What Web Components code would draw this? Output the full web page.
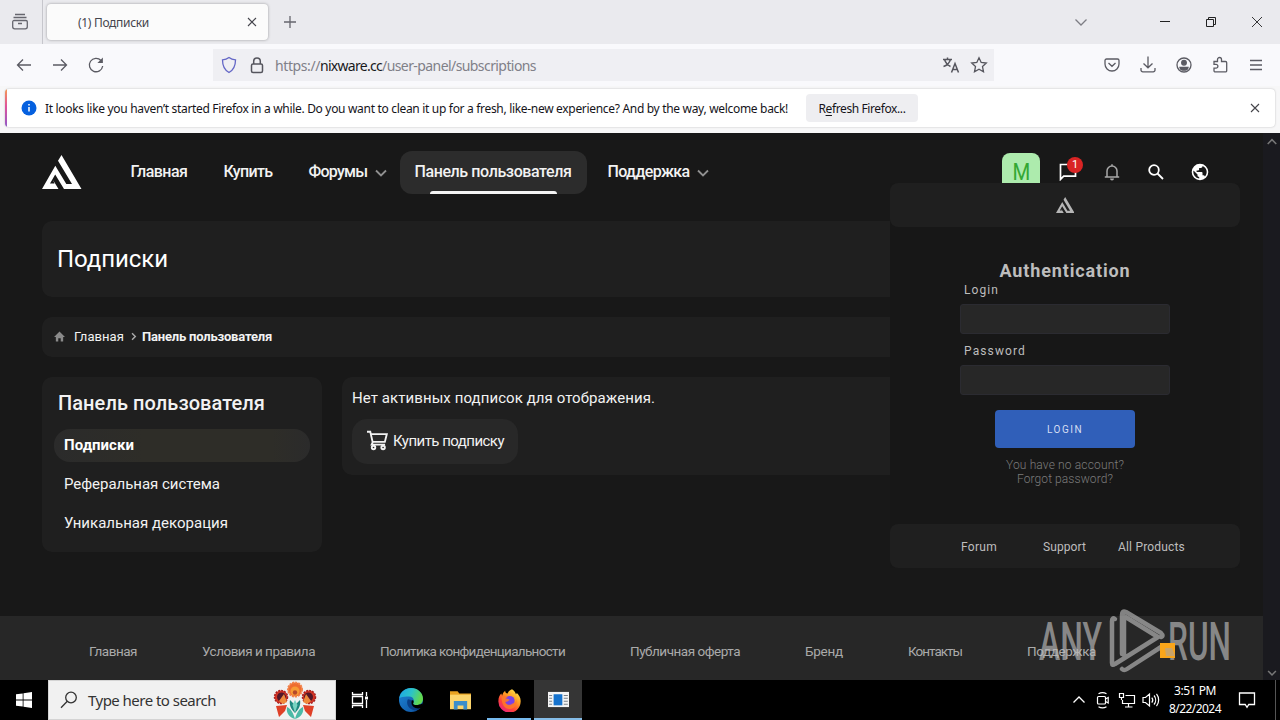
<!DOCTYPE html>
<html lang="ru">
<head>
<meta charset="utf-8">
<title>Подписки</title>
<style>
  body {
    margin: 0;
    width: 1280px;
    height: 720px;
    overflow: hidden;
    background: #000;
    font-family: Roboto, "Noto Sans", sans-serif;
  }
</style>
</head>
<body>
<desktop-screen></desktop-screen>

<script>
const ICONS = {
  view: `<path d="M4 1.500h10M2.500 4.500h13M3 7.500h12a1.300 1.300 0 0 1 1.300 1.300v5a2 2 0 0 1-2 2H3.700a2 2 0 0 1-2-2v-5A1.300 1.300 0 0 1 3 7.500zM7 10.500h4"/>`,
  close: `<path d="M5 5l8 8M13 5l-8 8"/>`,
  closeBig: `<path d="M4 4l10 10M14 4l-10 10"/>`,
  plus: `<path d="M9 3v12M3 9h12"/>`,
  down: `<path d="M3.500 6.500L9 12l5.500-5.500"/>`,
  min: `<path d="M4 8.500h10"/>`,
  restore: `<path d="M4.500 6.500h7v7h-7zM6.500 6.500v-2h7v7h-2"/>`,
  back: `<path d="M16 9H2.500M8 3.500L2.500 9 8 14.500"/>`,
  forward: `<path d="M2 9h13.500M10 3.500L15.500 9 10 14.500"/>`,
  reload: `<path d="M15.700 10A6.700 6.700 0 1 1 14 4.500"/><path d="M15.900 1.500v5.500h-5.500z" fill="currentColor" stroke="none"/>`,
  shield: `<path d="M9 1.500c2 1.600 4 2.200 6.500 2.400 0 6-1.500 9.700-6.500 12.600C4 13.600 2.500 9.900 2.500 3.900 5 3.700 7 3.100 9 1.500z"/>`,
  lock: `<rect x="3.500" y="8" width="11" height="8.500" rx="1.500"/><path d="M5.700 8V5.300a3.300 3.300 0 0 1 6.600 0V8"/>`,
  translate: `<path d="M1 3.500h9M5.500 1.500v2M2.500 3.500c1 3 3 5.500 6 7M8.500 3.500c-1 3-3.500 6-7 7M9.500 16.500l3.500-9 3.500 9M10.700 13.500h4.600"/>`,
  star: `<path d="M9 1.800l2.200 4.700 5.100.600-3.800 3.500 1 5.200L9 13.200l-4.500 2.600 1-5.200-3.800-3.500 5.100-.600z"/>`,
  pocket: `<path d="M3.500 3h11A1.500 1.500 0 0 1 16 4.500V8A7 7 0 0 1 2 8V4.500A1.500 1.500 0 0 1 3.500 3zM5.500 7L9 10.300 12.500 7"/>`,
  download: `<path d="M9 .500v11M4.500 7.500L9 11.800l4.500-4.300M2 12v2A1.800 1.800 0 0 0 3.800 15.800h10.400A1.800 1.800 0 0 0 16 14v-2"/>`,
  account: `<circle cx="9" cy="9" r="7"/><circle cx="9" cy="6.800" r="2.300" fill="currentColor"/><path d="M5 11.500h8c-.500 2-2.300 2.700-4 2.700s-3.500-.700-4-2.700z" fill="currentColor"/>`,
  puzzle: `<path d="M3 5.500h3.500V3.500a2 2 0 0 1 4 0v2h4A1.200 1.200 0 0 1 15.700 6.700v8a1.200 1.200 0 0 1-1.200 1.200H4.200A1.200 1.200 0 0 1 3 14.700v-2.500h2a1.900 1.900 0 0 0 0-3.800H3z"/>`,
  menu: `<path d="M3 4.500h12M3 9h12M3 13.500h12"/>`,
  info: `<circle cx="9" cy="9" r="7.500" fill="#0560df" stroke="none"/><path d="M9 8v4.500M9 5v1.400" stroke="#fff" stroke-width="1.500"/>`,
  logo: `<path d="M0 34L13.300 10.700 24.300 29H30L16 5.700 19.500 0 39.500 34H22L13.200 19.500 8 28.500h4.500l-1.500-3.500 5.500 9z" fill="currentColor" stroke="none"/>`,
  chevron: `<path d="M4 6.500L9 11.500 14 6.500"/>`,
  right: `<path d="M7 4.500L11.500 9 7 13.500"/>`,
  home: `<path d="M9 1L0 10h3v7h4v-5h4v5h4v-7h3z" fill="currentColor" stroke="none"/>`,
  chat: `<path d="M1.500 1.500h15v11.700H4.700L1.500 16.400z"/>`,
  bell: `<path d="M4 13.500V8a5 5 0 0 1 10 0v5.500M1.800 14h14.400M9 1.200v1.800"/><path d="M7 15.500h4a2 2 0 0 1-4 0z" fill="currentColor" stroke="none"/>`,
  search: `<circle cx="7" cy="7" r="4.800"/><path d="M10.500 10.500l5.500 5.500"/>`,
  globe: `<path d="M9 .7a8.300 8.300 0 1 0 0 16.600A8.300 8.300 0 0 0 9 .7zM8.200 15.600A6.700 6.700 0 0 1 2.500 7.500l4 4v.8c0 .9.700 1.700 1.700 1.700zm5.700-2.100a1.700 1.700 0 0 0-1.600-1.200h-.8V9.800c0-.5-.4-.8-.9-.8h-5V7.400h1.700c.5 0 .8-.4.800-.8V4.900h1.700c.9 0 1.700-.8 1.700-1.700v-.3a6.600 6.600 0 0 1 2.400 10.600z" fill="currentColor" stroke="none"/>`,
  cart: `<path d="M0 1.500h2.800l2 8.700h10.500L17 3.500H3.400M5 10.200l-1 2.300h11.500"/><circle cx="5.600" cy="15" r="1.500"/><circle cx="13.800" cy="15" r="1.500"/>`,
  windows: `<path d="M1 3.300l6.700-.9v6.200H1zM8.500 2.300L17 1v7.600H8.500zM1 9.400h6.700v6.200L1 14.700zM8.500 9.400H17V17l-8.500-1.200z" fill="currentColor" stroke="none"/>`,
  find: `<circle cx="11" cy="6.500" r="5.300"/><path d="M7.300 10.300L1 16.700"/>`,
  taskview: `<path d="M1.500 1v2.500h10V1M1.500 5.500h10v7h-10zM1.500 17v-2.500h10V17M15.500 1v4M15.500 9v8"/><path d="M14 5.500h3v3h-3z" fill="currentColor" stroke="none"/>`,
  edge: `<defs><linearGradient id="e" x1="0" y1="0" x2="1" y2=".3"><stop offset="0" stop-color="#1ba4e8"/><stop offset=".55" stop-color="#2cc3c8"/><stop offset="1" stop-color="#62d94e"/></linearGradient><linearGradient id="f" x1="0" y1="0" x2="1" y2="1"><stop offset="0" stop-color="#1f86d6"/><stop offset="1" stop-color="#0c509f"/></linearGradient></defs>
    <g stroke="none"><circle cx="9" cy="9" r="9" fill="url(#f)"/><path d="M.2 7.500C1 2.800 4.800 0 9 0c5 0 9 3.700 9 8 0 3.200-2.300 4.800-4.800 4.800-2.200 0-3-.9-2.500-1.800 1-1.400.4-4.300-3-4.600C4.400 6 1.500 6.700.2 7.500z" fill="url(#e)"/><path d="M6.700 8.500c-1.700 3 .2 7.700 5.300 8.300 2 0 3.600-.9 4.700-2.400-4 1.300-7.200-.2-7.300-3.200 0-.9.500-1.500.8-2.100z" fill="#0a3f86"/><path d="M9.300 10.500c.4-1.500 1.700-1.800 1.700 0 0 .8-.9 1.300.1 1.900 1.200.7 4 .5 6.400-.7l.3 1.300-.7 1.600c-3.200 2-8.100-.1-7.800-4.100z" fill="#000"/></g>`,
  folder: `<g stroke="none"><path d="M0 1h6.500l1.500 2H18v13H0z" fill="#e9a321"/><path d="M0 4h18v12.500H0z" fill="#fcd56c"/><path d="M3.300 9.500h11.400v7.200h-3.200v-3.500h-5v3.500H3.300z" fill="#3b8ecb"/></g>`,
  firefox: `<defs><linearGradient id="x" x1=".9" y1="0" x2=".2" y2="1"><stop offset="0" stop-color="#fff14f"/><stop offset=".4" stop-color="#ff9a22"/><stop offset=".7" stop-color="#ff4338"/><stop offset="1" stop-color="#e6208a"/></linearGradient></defs>
    <g stroke="none"><path d="M11 .2c2 1.300 2.700 2.700 3 4 .5-.3.600-.8.600-1.300 2 2 3.400 4.200 3.100 7.200A8.700 8.700 0 0 1 .3 9.500c0-3 1-4.800 2.300-6l.6 1.800c.4-1.700 1.300-3 2.400-3.900 0 1.300.7 2 1.900 2.200C8.300 1.500 9.600.7 11 .2z" fill="url(#x)"/><circle cx="9.200" cy="9.200" r="3.800" fill="#7a42e6"/><path d="M2.800 6.500c2-1.300 3.700-1.200 5-.2-1 .2-1.500.8-2 1.200 1.300 0 2.200.4 3.300 1-1 1.500-2.300 1.500-3.500 1.700.8 2.400 4 2.900 5.700 1.200 1.700 0 3-1 3-3 1 3-1 7-5 7.300-3.800.200-6.500-3.200-6.500-9.200z" fill="#ff7a28" opacity=".85"/></g>`,
  app: `<g stroke="none"><path d="M0 2.500h18v13H0z" fill="#f4f4f4"/><path d="M4.800 4.500h7.500V14H4.800z" fill="#1673ce"/><path d="M1 5.500h2.500M1 8h2.500M1 10.500h2.500M1 13h2.500M13.500 5.500H17M13.500 8H17M13.500 10.500H17M13.500 13H17" stroke="#7a8088" stroke-width=".9"/></g>`,
  up: `<path d="M3.500 11.500L9 6l5.500 5.500"/>`,
  camera: `<rect x="3.500" y="5.500" width="8" height="7.500" rx="1"/><path d="M11.500 8l2.700-1.500v5.500L11.500 10.500M4.500 2.800a8 8 0 0 1 8 0M4.500 15.700a8 8 0 0 0 8 0"/>`,
  network: `<path d="M7.500 4.500h9v8h-12V9M10.500 12.500V16M7 16h7.500M1.500 2.500h4v4h-4zM3.500 6.500v2.500"/>`,
  sound: `<path d="M1 6.500h2.500L7.500 3v12L3.500 11.500H1zM9.800 6.500a4 4 0 0 1 0 5M12 4.500a7 7 0 0 1 0 9M14.500 2.800a10 10 0 0 1 0 12.400"/>`,
  note: `<path d="M1.500 2h15v11.500h-5.700L9 16.300 7.200 13.500H1.500z"/>`
};

class UiIcon extends HTMLElement {
  connectedCallback() {
    const size = this.getAttribute('size') || 18;
    const box = this.getAttribute('box') || '0 0 18 18';
    const w = this.getAttribute('w') || 1.3;
    this.attachShadow({ mode: 'open' }).innerHTML = `
      <style>
        :host { display: inline-flex; flex: none; align-items: center; justify-content: center; }
        svg { display: block; fill: none; stroke: currentColor; }
      </style>
      <svg height="${size}" viewBox="${box}" stroke-width="${w}" style="width:${box === '0 0 18 18' ? size + 'px' : 'auto'}">${ICONS[this.getAttribute('name')]}</svg>
    `;
  }
}

// Spreads its text over a fixed width by adjusting the letter spacing
class FitText extends HTMLElement {
  connectedCallback() {
    this.attachShadow({ mode: 'open' }).innerHTML = `
      <style>:host { display: inline-block; flex: none; white-space: nowrap; }</style><slot></slot>
    `;
    const width = Number(this.getAttribute('width'));
    const diff = width - this.getBoundingClientRect().width;
    this.style.letterSpacing = diff / this.textContent.length + 'px';
    this.style.width = width + 'px';
  }
}

class BrowserTabs extends HTMLElement {
  connectedCallback() {
    this.attachShadow({ mode: 'open' }).innerHTML = `
      <style>
        :host {
          display: flex;
          align-items: center;
          height: 44px;
          background: #eaeaee;
          color: #66666e;
          font: 12px "Noto Sans", sans-serif;
        }
        .view { width: 43px; height: 44px; box-sizing: border-box; padding-right: 2px; border-right: 1px solid #c6c6cc; }
        .tab {
          display: flex;
          align-items: center;
          width: 221px;
          height: 36px;
          margin-left: 4px;
          padding: 0 7px 0 31px;
          box-sizing: border-box;
          border-radius: 4px;
          background: #fbfbfb;
          box-shadow: 0 0 3px rgba(0, 0, 0, .35);
          justify-content: space-between;
          color: #45454d;
        }
        .plus { margin-left: 13px; }
        .list { margin-left: auto; width: 30px; margin-right: 46px; color: #7d7d84; }
        .win { width: 46px; color: #222; }
        .last { margin-right: 0; }
      </style>
      <ui-icon class="view" name="view"></ui-icon>
      <div class="tab"><fit-text width="71">(1) Подписки</fit-text><ui-icon name="close" w="1.100"></ui-icon></div>
      <ui-icon class="plus" name="plus"></ui-icon>
      <ui-icon class="list" name="down"></ui-icon>
      <ui-icon class="win" name="min" w="1"></ui-icon>
      <ui-icon class="win" name="restore" w="1"></ui-icon>
      <ui-icon class="win last" name="closeBig" w=".9"></ui-icon>
    `;
  }
}

class BrowserToolbar extends HTMLElement {
  connectedCallback() {
    this.attachShadow({ mode: 'open' }).innerHTML = `
      <style>
        :host {
          display: flex;
          align-items: center;
          height: 42px;
          padding: 0 6px;
          background: #f9f9fc;
          color: #5b5b63;
        }
        .btn { width: 36px; }
        .address {
          display: flex;
          align-items: center;
          width: 781px;
          height: 32px;
          margin: 0 100px 0 99px;
          padding: 0 1px 0 2px;
          box-sizing: border-box;
          background: #efeff3;
          font: 14px "Noto Sans", sans-serif;
          color: #808088;
        }
        .address ui-icon { width: 28px; color: #55555d; }
        .address .shield { color: #6467c6; }
        .url { display: flex; flex: 1; padding-left: 4px; }
        .host { color: #18181c; }
      </style>
      <ui-icon class="btn" name="back"></ui-icon>
      <ui-icon class="btn" name="forward"></ui-icon>
      <ui-icon class="btn" name="reload"></ui-icon>
      <div class="address">
        <ui-icon class="shield" name="shield"></ui-icon>
        <ui-icon name="lock" w="1.500"></ui-icon>
        <div class="url"><fit-text width="45">https://</fit-text><fit-text class="host" width="62">nixware.cc</fit-text><fit-text width="154">/user-panel/subscriptions</fit-text></div>
        <ui-icon name="translate" w="1.500"></ui-icon>
        <ui-icon name="star"></ui-icon>
      </div>
      <ui-icon class="btn" name="pocket"></ui-icon>
      <ui-icon class="btn" name="download"></ui-icon>
      <ui-icon class="btn" name="account"></ui-icon>
      <ui-icon class="btn" name="puzzle"></ui-icon>
      <ui-icon class="btn" name="menu"></ui-icon>
    `;
  }
}

class RefreshNotice extends HTMLElement {
  connectedCallback() {
    this.attachShadow({ mode: 'open' }).innerHTML = `
      <style>
        :host { display: block; height: 47px; padding: 3px 5px 0; box-sizing: border-box; background: #f7f7f8; }
        .card {
          display: flex;
          align-items: center;
          height: 38px;
          border-radius: 4px;
          background: linear-gradient(#f59a52, #e0529a 45%, #9059c8) left / 2px 100% no-repeat #fff;
          box-shadow: 0 0 2px rgba(0, 0, 0, .25);
          padding-left: 15px;
          font: 12px "Noto Sans", sans-serif;
          color: #15141a;
        }
        .text { margin-left: 7px; }
        button {
          width: 112px;
          height: 28px;
          margin-left: 18px;
          padding: 0;
          border: 0;
          border-radius: 4px;
          background: #eeeef1;
          font: inherit;
          color: inherit;
        }
        u { text-underline-offset: 2px; }
        .close { margin: 0 11px 0 auto; color: #44444a; }
      </style>
      <div class="card">
        <ui-icon name="info"></ui-icon>
        <fit-text class="text" width="743">It looks like you haven’t started Firefox in a while. Do you want to clean it up for a fresh, like-new experience? And by the way, welcome back!</fit-text>
        <button><fit-text width="87">R<u>e</u>fresh Firefox...</fit-text></button>
        <ui-icon class="close" name="close" w="1.100"></ui-icon>
      </div>
    `;
  }
}

class SiteHeader extends HTMLElement {
  connectedCallback() {
    this.attachShadow({ mode: 'open' }).innerHTML = `
      <style>
        :host { display: flex; align-items: center; height: 43px; color: #fff; font-size: 16px; font-weight: 500; }
        .logo { margin: 0 34px 2px 0; }
        nav { display: flex; gap: 6px; flex: 1; }
        a { position: relative; display: flex; align-items: center; height: 43px; padding: 0 15px 2px; box-sizing: border-box; color: #f2f2f2; }
        a ui-icon { margin: 3px -11px 0 4px; color: #909090; }
        .active { border-radius: 12px; background: #2c2c2c; }
        .active::after {
          content: "";
          position: absolute;
          left: 30px;
          right: 30px;
          bottom: 0;
          height: 3px;
          border-radius: 3px 3px 0 0;
          background: #f4f4f4;
        }
        .avatar {
          width: 38px;
          height: 38px;
          margin: 0 6px 2px 0;
          border-radius: 8px;
          background: #adebad;
          color: #33a833;
          font: 24px/38px Roboto, sans-serif;
          text-align: center;
        }
        .avatar span { display: inline-block; transform: scaleX(.85); }
        .tool { position: relative; width: 44px; display: flex; justify-content: center; margin-bottom: 2px; }
        .dim { color: #a8a8a8; }
        .badge {
          position: absolute;
          left: 21px;
          top: -6px;
          width: 16px;
          height: 16px;
          border-radius: 50%;
          background: #d92424;
          font: 11px/16px Roboto, sans-serif;
          text-align: center;
        }
      </style>
      <ui-icon class="logo" name="logo" size="34" box="0 0 39.500 34"></ui-icon>
      <nav>
        <a><fit-text width="57">Главная</fit-text></a>
        <a><fit-text width="49">Купить</fit-text></a>
        <a><fit-text width="59">Форумы</fit-text><ui-icon name="chevron" w="1.800"></ui-icon></a>
        <a class="active"><fit-text width="157">Панель пользователя</fit-text></a>
        <a><fit-text width="82">Поддержка</fit-text><ui-icon name="chevron" w="1.800"></ui-icon></a>
      </nav>
      <div class="avatar"><span>M</span></div>
      <div class="tool"><ui-icon name="chat" w="1.700"></ui-icon><span class="badge">1</span></div>
      <div class="tool dim"><ui-icon name="bell" w="1.500"></ui-icon></div>
      <div class="tool"><ui-icon name="search" w="1.800"></ui-icon></div>
      <div class="tool"><ui-icon name="globe"></ui-icon></div>
    `;
  }
}

class PanelBlock extends HTMLElement {
  connectedCallback() {
    this.attachShadow({ mode: 'open' }).innerHTML = `
      <style>
        :host { display: block; box-sizing: border-box; border-radius: 10px; background: #1f1f1f; color: #f2f2f2; }
      </style>
      <slot></slot>
    `;
  }
}

class SiteFooter extends HTMLElement {
  connectedCallback() {
    this.attachShadow({ mode: 'open' }).innerHTML = `
      <style>
        :host {
          display: flex;
          gap: 65px;
          align-items: center;
          height: 64px;
          padding: 6px 0 0 89px;
          box-sizing: border-box;
          background: #272727;
          color: #aaa;
          font-size: 13.5px;
        }
      </style>
      <fit-text width="48">Главная</fit-text>
      <fit-text width="113">Условия и правила</fit-text>
      <fit-text width="185">Политика конфиденциальности</fit-text>
      <fit-text width="110">Публичная оферта</fit-text>
      <fit-text width="38">Бренд</fit-text>
      <fit-text width="54">Контакты</fit-text>
      <fit-text width="69">Поддержка</fit-text>
    `;
  }
}

class SubscriptionsPage extends HTMLElement {
  connectedCallback() {
    this.attachShadow({ mode: 'open' }).innerHTML = `
      <style>
        :host { display: flex; height: 547px; background: #181818; }
        .page { display: flex; flex-direction: column; justify-content: space-between; width: 1263px; }
        .content { padding: 18px 41px 0 42px; }
        .title { display: flex; align-items: center; height: 76px; margin-top: 27px; padding-left: 15px; font-size: 24px; color: #fff; }
        .crumbs { display: flex; align-items: center; height: 40px; margin-top: 20px; padding: 0 0 2px 12px; font-size: 13px; }
        .crumbs .home { margin-right: 9px; color: #8a8a8a; }
        .crumbs .sep { margin: 0 2px 0 3px; color: #aaa; }
        .columns { display: flex; align-items: flex-start; gap: 20px; margin-top: 20px; }
        .side { width: 280px; height: 175px; padding: 12px; }
        .side h3 { margin: 0 0 11px; padding-left: 4px; height: 29px; font-size: 20px; line-height: 29px; font-weight: 500; }
        .link { display: flex; align-items: center; height: 33px; margin-bottom: 6px; padding: 0 0 2px 10px; box-sizing: border-box; border-radius: 16px; font-size: 15px; }
        .current { background: linear-gradient(90deg, #2b2b2b, #2e2d28 35%, #2e2d28 85%, #2b2b2b); font-weight: 700; color: #fff; }
        .main { flex: 1; height: 98px; padding: 10px; font-size: 15px; }
        .main p { margin: 0 0 9px; line-height: 23px; height: 23px; }
        .main p fit-text { vertical-align: top; }
        .buy { display: flex; align-items: center; gap: 5px; width: 166px; height: 45px; padding: 0 0 2px 15px; box-sizing: border-box; border-radius: 15px; background: #282828; }
        .bar { display: flex; flex-direction: column; justify-content: space-between; align-items: center; flex: 1; padding-top: 2px; background: #1a1a1f; color: #777; }
      </style>
      <div class="page">
        <div class="content">
          <site-header></site-header>
          <panel-block class="title"><fit-text width="111">Подписки</fit-text></panel-block>
          <panel-block class="crumbs">
            <ui-icon class="home" name="home" size="11"></ui-icon>
            <fit-text width="50">Главная</fit-text>
            <ui-icon class="sep" name="right" size="13" w="2"></ui-icon>
            <b><fit-text width="130">Панель пользователя</fit-text></b>
          </panel-block>
          <div class="columns">
            <panel-block class="side">
              <h3><fit-text width="207">Панель пользователя</fit-text></h3>
              <div class="link current"><fit-text width="70">Подписки</fit-text></div>
              <div class="link"><fit-text width="156">Реферальная система</fit-text></div>
              <div class="link"><fit-text width="164">Уникальная декорация</fit-text></div>
            </panel-block>
            <panel-block class="main">
              <p><fit-text width="303">Нет активных подписок для отображения.</fit-text></p>
              <div class="buy"><ui-icon name="cart" size="21" w="1.600"></ui-icon><fit-text width="111">Купить подписку</fit-text></div>
            </panel-block>
          </div>
        </div>
        <site-footer></site-footer>
      </div>
      <div class="bar">
        <ui-icon name="up" size="14" w="2"></ui-icon>
        <ui-icon name="chevron" size="14" w="2"></ui-icon>
      </div>
    `;
  }
}

class AuthWindow extends HTMLElement {
  connectedCallback() {
    this.attachShadow({ mode: 'open' }).innerHTML = `
      <style>
        :host { display: flex; flex-direction: column; align-items: center; width: 350px; height: 385px; background: #171717; color: #bdbdbd; font-size: 12px; }
        header, footer { display: flex; width: 350px; height: 44px; border-radius: 8px; background: #1f1f1f; align-items: center; box-sizing: border-box; }
        header { justify-content: center; color: #b5b5b5; margin-bottom: 32px; padding-bottom: 1px; }
        h1 { margin: 0; font-size: 18px; line-height: 23px; height: 24px; font-weight: 700; }
        label { width: 202px; line-height: 14px; height: 14px; margin-top: 1px; }
        label:first-of-type { margin-top: 0; }
        input { width: 210px; height: 30px; margin: 7px 0 9px; padding: 0; box-sizing: border-box; border: 1px solid #2b2b31; border-radius: 3px; background: #272727; }
        button { display: flex; align-items: center; justify-content: center; width: 140px; height: 38px; margin: 6px 0 10px; border: 0; border-radius: 4px; background: #305fb9; color: #d5def2; font: 10px Roboto, sans-serif; }
        .hint { line-height: 14px; height: 14px; color: #7c7c7c; font-weight: 300; }
        footer { margin-top: auto; padding: 2px 0 0 71px; }
        .support { margin: 0 32px 0 46px; }
      </style>
      <header><ui-icon name="logo" size="16" box="0 0 39.500 34"></ui-icon></header>
      <h1><fit-text width="131">Authentication</fit-text></h1>
      <label><fit-text width="35">Login</fit-text></label>
      <input>
      <label><fit-text width="62">Password</fit-text></label>
      <input>
      <button><fit-text width="36">LOGIN</fit-text></button>
      <fit-text class="hint" width="118">You have no account?</fit-text>
      <fit-text class="hint" width="96">Forgot password?</fit-text>
      <footer>
        <fit-text width="36">Forum</fit-text>
        <fit-text class="support" width="43">Support</fit-text>
        <fit-text width="67">All Products</fit-text>
      </footer>
    `;
  }
}

class RunWatermark extends HTMLElement {
  connectedCallback() {
    this.attachShadow({ mode: 'open' }).innerHTML = `
      <style>
        :host { display: block; width: 210px; height: 75px; }
        svg { display: block; overflow: visible; }
        text { font: 500 54px Roboto, sans-serif; fill: #bbb; }
      </style>
      <svg width="210" height="75" viewBox="1035 605 210 75">
        <g opacity=".65">
          <text x="1039" y="660" textLength="63" lengthAdjust="spacingAndGlyphs">ANY</text>
          <text x="1168" y="660" textLength="63" lengthAdjust="spacingAndGlyphs">RUN</text>
          <g fill="none" stroke="#bbb" stroke-width="4.500" stroke-linejoin="round" stroke-linecap="round">
            <path d="M1115 619q-3-2-3 2v42q0 3 3 1l43-27-34-21v39"/>
            <path d="M1122 654v-39q0-5 4-3l35 21q3 3 0 4"/>
            <path d="M1122 669q2 2 5 0l34-22"/>
          </g>
        </g>
        <path d="M1160 643h15v15h-15z" fill="#f9a51a"/>
        <path d="M1165 648h7l3 8h-9z" fill="#c9a46a"/>
      </svg>
    `;
  }
}

class TaskFlower extends HTMLElement {
  connectedCallback() {
    this.attachShadow({ mode: 'open' }).innerHTML = `
      <style>:host { display: block; } svg { display: block; }</style>
      <svg width="46" height="38" viewBox="0 0 46 38">
        <path d="M4 25l11-1-2 6-6 6zM42 25l-11-1 2 6 6 6z" fill="#df4027"/>
        <path d="M23 38c-6-2-9-6-8-12 4 2 6 5 8 12zM23 38c6-2 9-6 8-12-4 2-6 5-8 12z" fill="#4ab9a6"/>
        <path d="M23 32c-4-4-6-8-5-13l5 5 5-5c1 5-1 9-5 13z" fill="#20887f"/>
        <path d="M23 19l2.500 5-2.500 8-2.500-8z" fill="#79d3c1"/>
        <circle cx="23" cy="8.500" r="7" fill="#ee6c30"/>
        <circle cx="23" cy="8.500" r="7" fill="none" stroke="#f2824a" stroke-width="2" stroke-dasharray="2 1"/>
        <circle cx="23" cy="10" r="4.500" fill="#f79a35"/>
        <circle cx="23" cy="11.500" r="2.200" fill="#b5482b"/>
        <circle cx="9" cy="16" r="6.500" fill="#d43524"/>
        <circle cx="9" cy="16" r="6.500" fill="none" stroke="#a82020" stroke-width="1.500" stroke-dasharray="2 1"/>
        <circle cx="9.500" cy="16" r="4.500" fill="#51182a"/>
        <path d="M7 20l5-7 3 8-4 2z" fill="#ef8a3b"/>
        <circle cx="37" cy="16" r="6.500" fill="#d43524"/>
        <circle cx="37" cy="16" r="6.500" fill="none" stroke="#a82020" stroke-width="1.500" stroke-dasharray="2 1"/>
        <circle cx="36.500" cy="16" r="4.500" fill="#51182a"/>
        <path d="M39 20l-5-7-3 8 4 2z" fill="#ef8a3b"/>
      </svg>
    `;
  }
}

class TaskBar extends HTMLElement {
  connectedCallback() {
    this.attachShadow({ mode: 'open' }).innerHTML = `
      <style>
        :host { display: flex; height: 40px; background: #000; color: #fff; font: 12px "Noto Sans", sans-serif; }
        .start { width: 48px; height: 40px; }
        .search {
          display: flex;
          align-items: center;
          width: 288px;
          padding: 0 17px 0 11px;
          box-sizing: border-box;
          border: 1px solid #d4d4d4;
          background: #f1f1f1;
          color: #333;
          font-size: 15px;
        }
        .search fit-text { margin-left: 10px; }
        .search task-flower { margin-left: auto; }
        .app { width: 48px; margin-right: 1px; border-bottom: 2px solid transparent; height: 40px; box-sizing: border-box; padding-top: 2px; }
        .task { width: 48px; margin-right: 3px; }
        .open { border-image: linear-gradient(90deg, transparent 4px, #76b9ed 4px, #76b9ed 44px, transparent 44px) 2; }
        .focus { background: #353535; border-color: #86bde8; padding: 0; }
        .tray { display: flex; margin-left: auto; }
        .tray ui-icon { width: 24px; }
        .clock { display: flex; flex-direction: column; align-items: center; justify-content: center; width: 64px; line-height: 18px; }
        .tray .note { width: 40px; }
        .peek { width: 5px; margin-left: 8px; border-left: 1px solid #555; box-sizing: border-box; }
      </style>
      <ui-icon class="start" name="windows"></ui-icon>
      <div class="search">
        <ui-icon name="find"></ui-icon>
        <fit-text width="128">Type here to search</fit-text>
        <task-flower></task-flower>
      </div>
      <ui-icon class="task" name="taskview"></ui-icon>
      <ui-icon class="app" name="edge" size="24"></ui-icon>
      <ui-icon class="app" name="folder" size="21"></ui-icon>
      <ui-icon class="app open" name="firefox" size="23"></ui-icon>
      <ui-icon class="app focus" name="app" size="21"></ui-icon>
      <div class="tray">
        <ui-icon name="up"></ui-icon>
        <ui-icon name="camera" w="1.200"></ui-icon>
        <ui-icon name="network" w="1.200"></ui-icon>
        <ui-icon name="sound" w="1.200"></ui-icon>
        <div class="clock"><fit-text width="42">3:51 PM</fit-text><fit-text width="52">8/22/2024</fit-text></div>
        <ui-icon class="note" name="note"></ui-icon>
        <div class="peek"></div>
      </div>
    `;
  }
}

class DesktopScreen extends HTMLElement {
  connectedCallback() {
    this.attachShadow({ mode: 'open' }).innerHTML = `
      <style>
        :host { display: block; position: relative; width: 1280px; height: 720px; }
        auth-window { position: absolute; left: 890px; top: 183px; }
        run-watermark { position: absolute; left: 1035px; top: 605px; }
      </style>
      <browser-tabs></browser-tabs>
      <browser-toolbar></browser-toolbar>
      <refresh-notice></refresh-notice>
      <subscriptions-page></subscriptions-page>
      <task-bar></task-bar>
      <auth-window></auth-window>
      <run-watermark></run-watermark>
    `;
  }
}

customElements.define('ui-icon', UiIcon);
customElements.define('browser-tabs', BrowserTabs);
customElements.define('browser-toolbar', BrowserToolbar);
customElements.define('refresh-notice', RefreshNotice);
customElements.define('site-header', SiteHeader);
customElements.define('panel-block', PanelBlock);
customElements.define('site-footer', SiteFooter);
customElements.define('subscriptions-page', SubscriptionsPage);
customElements.define('auth-window', AuthWindow);
customElements.define('run-watermark', RunWatermark);
customElements.define('task-flower', TaskFlower);
customElements.define('task-bar', TaskBar);
customElements.define('desktop-screen', DesktopScreen);
// last, so the text is measured with its final font
customElements.define('fit-text', FitText);
</script>
</body>
</html>
